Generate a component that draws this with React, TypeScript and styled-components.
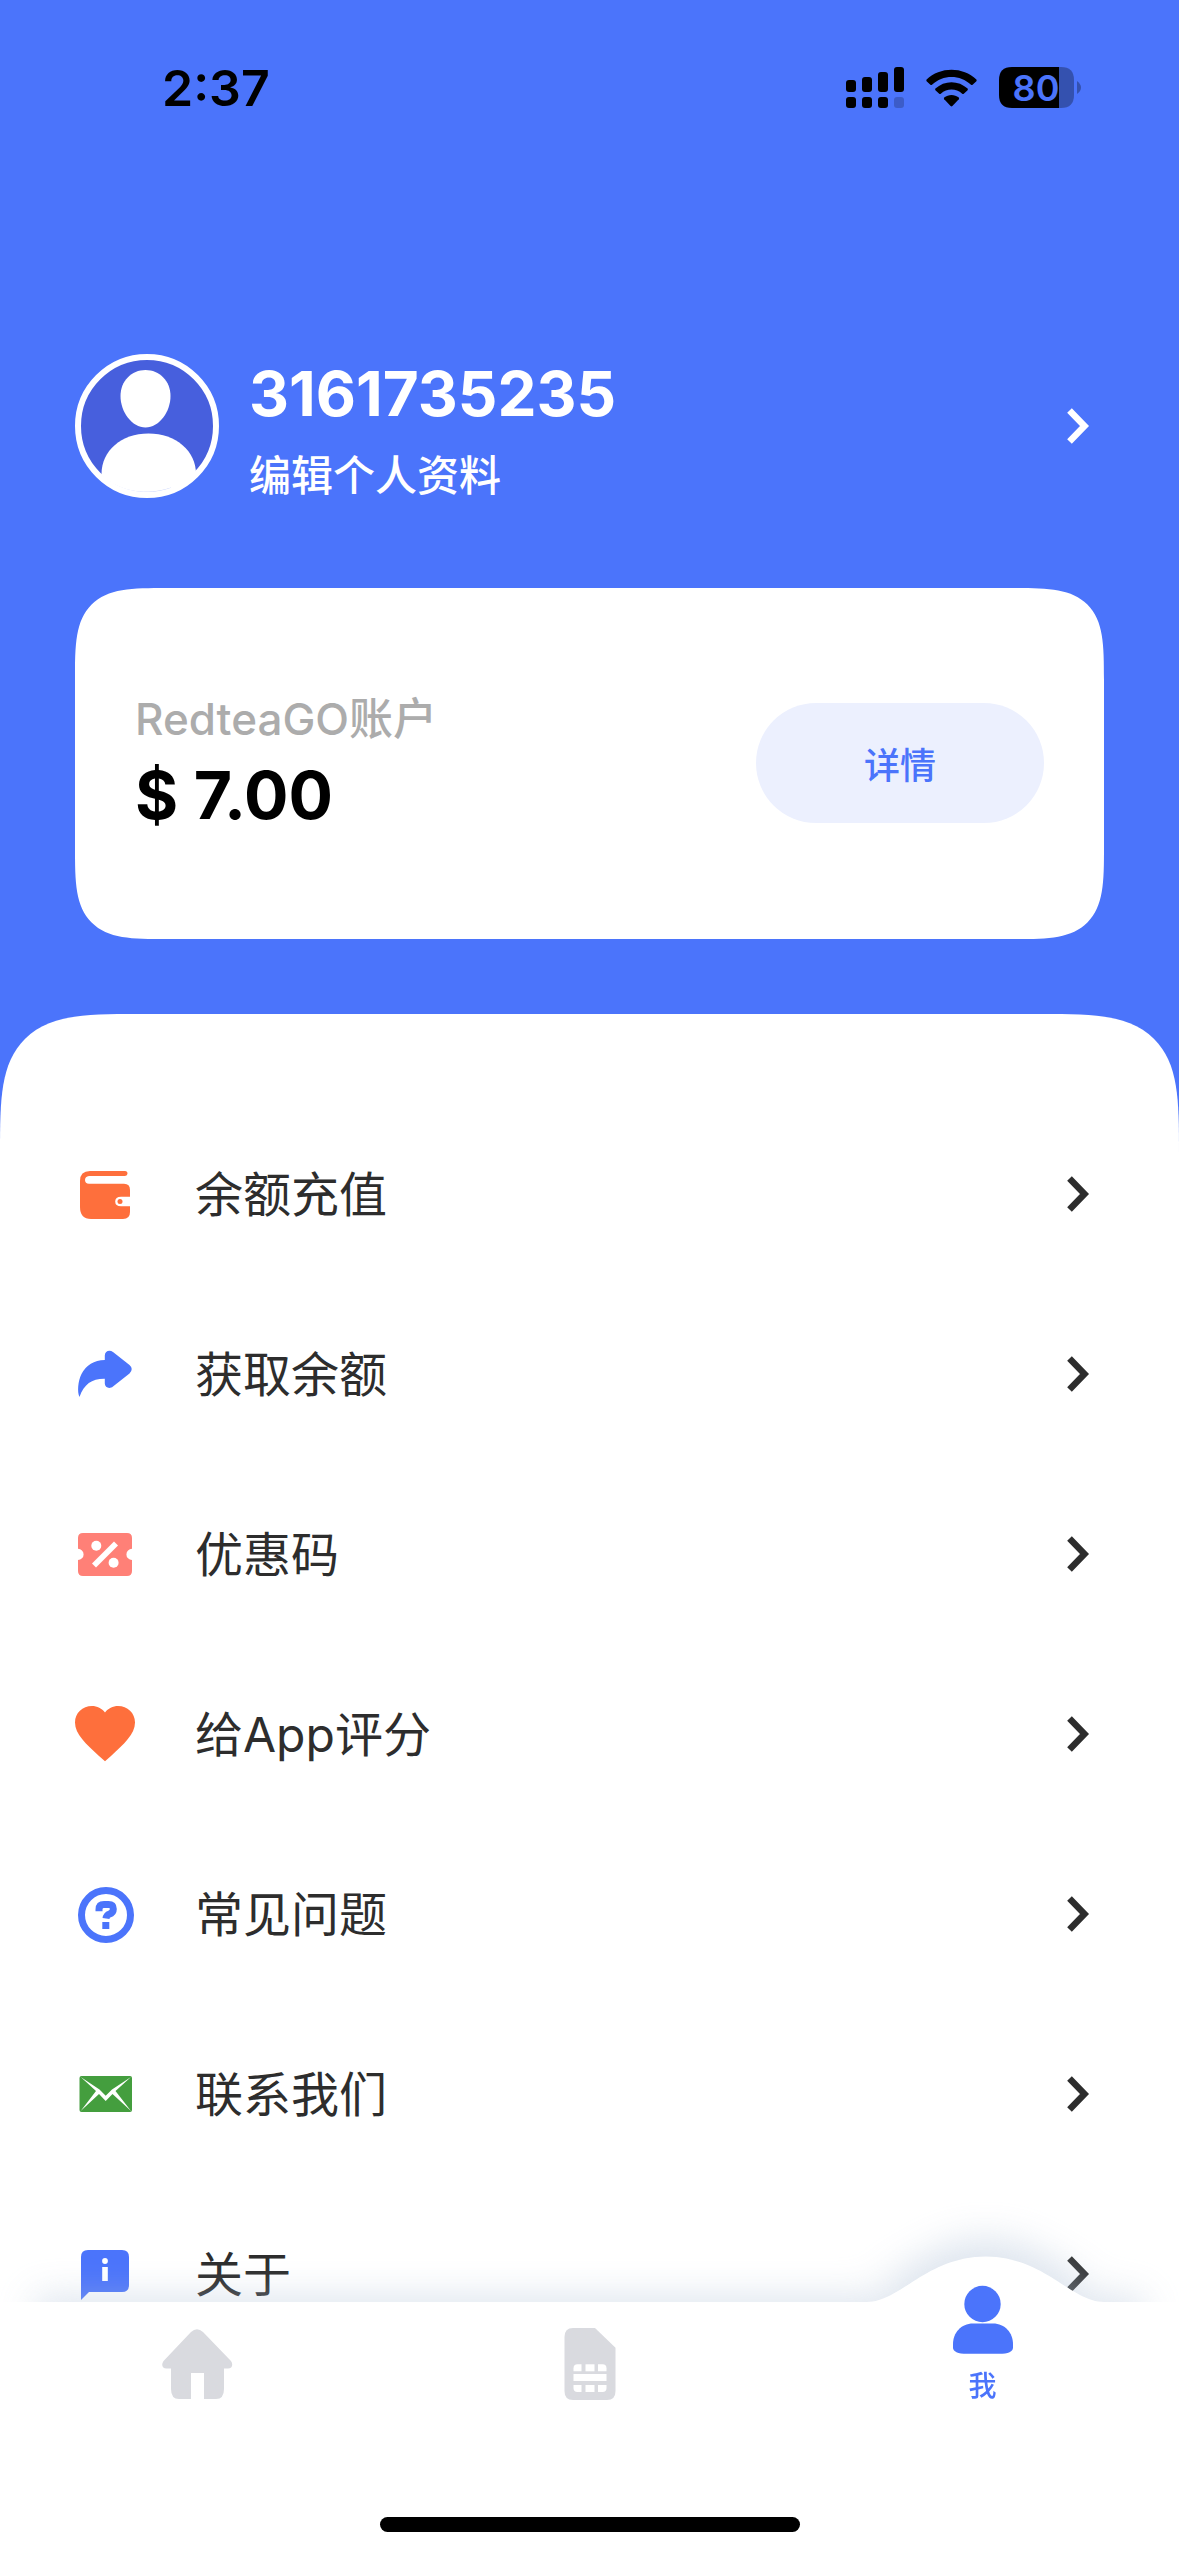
import React from "react";
import styled, { createGlobalStyle, css } from "styled-components";

const color = {
  blue: "#4b74fb",
  ink: "#2d2d2d",
  muted: "#acacac",
  orange: "#fe6f3c",
  coral: "#ff8077",
  green: "#449e3e",
  idle: "#d9dadf",
};

const GlobalStyle = createGlobalStyle`
  * { box-sizing: border-box; }
  body {
    margin: 0;
    background: #fff;
    font-family: Inter, "Noto Sans CJK SC", sans-serif;
    color: ${color.ink};
  }
  button {
    margin: 0;
    padding: 0;
    border: 0;
    background: none;
    font: inherit;
    color: inherit;
    text-align: left;
    cursor: pointer;
  }
`;

const Page = styled.div`
  display: flex;
  flex-direction: column;
  min-height: 100vh;
  background: ${color.blue};
`;

const StatusBar = styled.div`
  display: flex;
  align-items: center;
  justify-content: space-between;
  height: 175px;
  padding: 0 98px 0 162px;
  color: #000;
`;

const Clock = styled.time`
  font-size: 50px;
  line-height: 60px;
  font-weight: 600;
`;

const StatusIcons = styled.div`
  display: flex;
  align-items: center;
  gap: 22px;

  svg {
    display: block;
    overflow: visible;
  }
`;

const Header = styled.header`
  display: flex;
  flex-direction: column;
  gap: 88px;
  padding: 176px 75px 75px;
`;

const Profile = styled.button`
  display: flex;
  align-items: center;
  gap: 30px;
  color: #fff;
`;

const ProfileText = styled.span`
  display: flex;
  flex: 1;
  flex-direction: column;
  gap: 16px;
  padding-top: 1px;
`;

const UserId = styled.span`
  font-size: 62px;
  line-height: 84px;
  font-weight: 700;
`;

const EditHint = styled.span`
  font-size: 42px;
  line-height: 48px;
  font-weight: 500;
`;

const ChevronSlot = styled.span`
  display: flex;
  padding-right: 14px;
`;

const Card = styled.section`
  display: flex;
  align-items: center;
  justify-content: space-between;
  padding: 103px 60px 104px;
  border-radius: 60px;
  background: #fff;

  @supports (corner-shape: superellipse(1.8)) {
    border-radius: 92px;
    corner-shape: superellipse(1.8);
  }
`;

const Account = styled.div`
  display: flex;
  flex-direction: column;
  gap: 8px;
`;

const AccountName = styled.span`
  font-size: 44px;
  line-height: 56px;
  font-weight: 500;
  color: ${color.muted};
`;

const Balance = styled.strong`
  font-size: 66px;
  line-height: 80px;
  font-weight: 700;
  color: #000;
`;

const DetailButton = styled.button`
  width: 288px;
  height: 120px;
  border-radius: 60px;
  background: #ecf0fe;
  font-size: 36px;
  font-weight: 500;
  color: ${color.blue};
  text-align: center;
`;

const Sheet = styled.main`
  flex: 1;
  padding: 90px 75px 192px;
  border-radius: 90px 90px 0 0;
  background: #fff;

  @supports (corner-shape: superellipse(1.8)) {
    border-radius: 138px 138px 0 0;
    corner-shape: superellipse(1.8);
  }
`;

const MenuRow = styled.button`
  display: flex;
  align-items: center;
  gap: 60px;
  width: 100%;
  height: 180px;
  font-size: 48px;
`;

const MenuLabel = styled.span`
  flex: 1;
  padding-bottom: 6px;
`;

const TabBar = styled.nav`
  position: fixed;
  right: 0;
  bottom: 0;
  left: 0;
  padding-bottom: 24px;
`;

const TabBackdrop = styled.svg`
  position: absolute;
  inset: 0;
  width: 100%;
  height: 100%;
  overflow: visible;
  pointer-events: none;
`;

const TabList = styled.div`
  position: relative;
  display: grid;
  grid-template-rows: 104px;
  grid-template-columns: repeat(3, 1fr);
  align-items: end;
`;

const Tab = styled.button<{ $active?: boolean }>`
  display: flex;
  flex-direction: column;
  align-items: center;
  gap: 16px;
  padding-bottom: 6px;
  color: ${color.idle};
  ${(p) =>
    p.$active &&
    css`
      color: ${color.blue};
    `}
`;

const TabLabel = styled.span`
  font-size: 28px;
  line-height: 28px;
  font-weight: 500;
`;

const HomeIndicator = styled.div`
  position: relative;
  width: 420px;
  height: 15px;
  margin: 111px auto 0;
  border-radius: 8px;
  background: #000;
`;

const SignalIcon = () => (
  <svg width="58" height="41" viewBox="0 0 58 41" aria-hidden="true">
    <rect x="0" y="13" width="10" height="12" rx="3" />
    <rect x="16" y="10" width="10" height="15" rx="3" />
    <rect x="32" y="5" width="10" height="20" rx="3" />
    <rect x="48" y="0" width="10" height="25" rx="3" />
    <rect x="0" y="30" width="10" height="11" rx="3" />
    <rect x="16" y="30" width="10" height="11" rx="3" />
    <rect x="32" y="30" width="10" height="11" rx="3" />
    <rect x="48" y="30" width="10" height="11" rx="3" opacity="0.2" />
  </svg>
);

const WifiIcon = () => (
  <svg width="51" height="38" viewBox="0 0 51 38" aria-hidden="true">
    <path d="M0.6 10.6C14 -2.6 37 -2.6 50.4 10.6Q51 11.4 50.4 12.2L46.6 15.8Q45.8 16.4 45 15.8C34.200 5.4 16.800 5.4 6 15.8Q5.200 16.4 4.400 15.8L0.600 12.200Q0 11.400 0.600 10.600Z" />
    <path d="M9.400 19.600C18.400 11 32.600 11 41.600 19.600Q42.200 20.400 41.600 21.200L37.800 24.800Q37 25.400 36.200 24.800C30 19.200 21 19.200 14.800 24.800Q14 25.400 13.200 24.800L9.400 21.200Q8.800 20.400 9.400 19.600Z" />
    <path d="M18.200 28.600C22.400 25 28.600 25 32.800 28.600Q33.500 29.400 32.800 30.200L26.400 37Q25.500 37.800 24.600 37L18.200 30.200Q17.500 29.400 18.200 28.600Z" />
  </svg>
);

const BatteryIcon = () => (
  <svg width="82" height="41" viewBox="0 0 82 41" role="img" aria-label="80%">
    <path d="M60 0H62Q75 0 75 13V28Q75 41 62 41H60Z" opacity="0.3" />
    <path d="M13 0H60V41H13Q0 41 0 28V13Q0 0 13 0Z" />
    <path d="M78 14Q82 17 82 20.500Q82 24 78 27Z" opacity="0.3" />
    <text x="37" y="34" textAnchor="middle" fontSize="36" fontWeight="600" fill={color.blue}>
      80
    </text>
  </svg>
);

const Avatar = () => (
  <svg width="144" height="144" viewBox="0 0 144 144" aria-hidden="true">
    <defs>
      <clipPath id="avatar-disc">
        <circle cx="72" cy="72" r="69" />
      </clipPath>
    </defs>
    <circle cx="72" cy="72" r="69" fill="#475fdd" />
    <g clipPath="url(#avatar-disc)" fill="#fff">
      <path d="M70.500 16C84.500 16 95.500 27 95.500 42C95.500 58 84 73.500 70.500 73.500C57 73.500 45.500 58 45.500 42C45.500 27 56.500 16 70.500 16Z" />
      <path d="M26.500 120C26.500 97 46 79.500 73.500 79.500C101 79.500 121 97 121 120V144H26.500Z" />
    </g>
    <path d="M27 122C46 139 72 142 96 134" fill="none" stroke="#b9c6fb" strokeWidth="0.800" />
    <circle cx="72" cy="72" r="69" fill="none" stroke="#fff" strokeWidth="6" />
  </svg>
);

const Chevron = () => (
  <ChevronSlot>
    <svg width="24" height="38" viewBox="0 0 24 38" aria-hidden="true">
      <path d="M3.500 3.500L18.500 19L3.500 34.500" fill="none" stroke="currentColor" strokeWidth="6.500" />
    </svg>
  </ChevronSlot>
);

const Glyph = ({ size = 60, children }: { size?: number; children: React.ReactNode }) => (
  <svg width={size} height={size} viewBox={`0 0 ${size} ${size}`} aria-hidden="true">
    {children}
  </svg>
);

const WalletIcon = () => (
  <Glyph>
    <g fill={color.orange}>
      <path d="M15 7H50Q52.500 7 52.500 9.600Q52.500 12 50 12H14Q10 12.500 10 16Q10 19.700 14 19.700H49Q55 19.700 55 26V32.700H46Q40.200 32.700 40.200 37.500Q40.200 42.300 46 42.300H55V48Q55 55 48 55H16Q5 55 5 43V17Q5 7 15 7Z" />
      <circle cx="45" cy="37.500" r="2.500" />
    </g>
  </Glyph>
);

const ShareIcon = () => (
  <Glyph>
    <path
      d="M4.500 53C2 48 3 37 6.500 30Q13.500 16.500 29.800 16V11.500C29.800 7 34.500 5.500 38 8L54.500 21Q59 25 54.500 29.500L38 42.500C34.500 45.500 29.800 43.500 29.800 39.500V34.700C17 34.500 9 40 4.500 53Z"
      fill={color.blue}
    />
  </Glyph>
);

const CouponIcon = () => (
  <Glyph>
    <path
      d="M8 9H52Q57 9 57 14V24.800A5.600 5.600 0 0 0 57 36V47Q57 52 52 52H8Q3 52 3 47V36A5.600 5.600 0 0 0 3 24.800V14Q3 9 8 9Z"
      fill={color.coral}
    />
    <circle cx="21.300" cy="21.700" r="5" fill="#fff" />
    <circle cx="38.600" cy="38.800" r="5" fill="#fff" />
    <path d="M41 19.500L19 41.500" stroke="#fff" strokeWidth="5.600" />
  </Glyph>
);

const HeartIcon = () => (
  <Glyph>
    <path
      d="M30 57.300L24 52C11 40 0 30 0 18.500C0 9 7.500 2 17 2C22 2 27 4.500 30 8.500C33 4.500 38 2 43 2C52.500 2 60 9 60 18.500C60 30 49 40 36 52Z"
      fill={color.orange}
    />
  </Glyph>
);

const HelpIcon = () => (
  <Glyph>
    <g fill="none" stroke={color.blue} strokeWidth="7">
      <circle cx="31" cy="31" r="24.500" />
      <path d="M24 27.300V25.500Q24 20.600 29 20.600H33.500Q38.300 20.600 38.300 25Q38.300 29 34.500 30Q31.500 31 31 34.500" />
      <path d="M27.300 41.500H34.300" />
    </g>
  </Glyph>
);

const MailIcon = () => (
  <Glyph>
    <rect x="4.500" y="12" width="52.500" height="36" rx="2" fill={color.green} />
    <path
      d="M5.700 13L24.500 25.500L30.700 31.700L37 25.500L56 13L40.500 27L56 47L37.500 30L30.700 37L24 30L5.700 47L21 27Z"
      fill="#fff"
    />
  </Glyph>
);

const AboutIcon = () => (
  <Glyph>
    <path d="M13 6H47Q54 6 54 13V41Q54 48 47 48H14L6 56V13Q6 6 13 6Z" fill={color.blue} />
    <circle cx="30" cy="17" r="2.900" fill="#fff" />
    <rect x="27.200" y="23" width="5.600" height="14" fill="#fff" />
  </Glyph>
);

const HomeIcon = () => (
  <Glyph size={72}>
    <path
      d="M30 4Q36 -1.500 42 4L69.500 32.500C72.500 36 71.500 40.500 67 40.500H63V61Q63 71 55 71H43V45H30V71H18Q10 71 10 61V40.500H5.500C0.800 40.500 0 36 3 32.500Z"
      fill="currentColor"
    />
  </Glyph>
);

const SimIcon = () => (
  <Glyph size={72}>
    <path
      d="M19 0H41L61.500 19.700V63Q61.500 72 53 72H19Q10.500 72 10.500 63V9Q10.500 0 19 0Z"
      fill="currentColor"
    />
    <g fill="#fff">
      <path d="M23.500 36.300H27.500V43.300H19.500V40.300Q19.500 36.300 23.500 36.300Z" />
      <rect x="31.500" y="36.300" width="9" height="7" />
      <path d="M44 36.300H48.500Q52.500 36.300 52.500 40.300V43.300H44Z" />
      <rect x="19.500" y="46" width="33" height="7" />
      <path d="M19.500 57H27.500V64H23.500Q19.500 64 19.500 60Z" />
      <rect x="31.500" y="57" width="9" height="7" />
      <path d="M44 57H52.500V60Q52.500 64 48.500 64H44Z" />
    </g>
  </Glyph>
);

const PersonIcon = () => (
  <Glyph size={72}>
    <g fill="currentColor">
      <circle cx="35.500" cy="20" r="18.200" />
      <path d="M26 39.500H46C58 39.500 66 49 66 60V63.500Q66 69.800 52 69.800H20Q6 69.800 6 63.500V60C6 49 14 39.500 26 39.500Z" />
    </g>
  </Glyph>
);

const BUMP = "M-119 1H119V0C85 0 60 -45 0 -45.500C-60 -45 -85 0 -119 0Z";

const menu = [
  { label: "余额充值", icon: WalletIcon },
  { label: "获取余额", icon: ShareIcon },
  { label: "优惠码", icon: CouponIcon },
  { label: "给App评分", icon: HeartIcon },
  { label: "常见问题", icon: HelpIcon },
  { label: "联系我们", icon: MailIcon },
  { label: "关于", icon: AboutIcon },
];

export default function App() {
  return (
    <>
      <GlobalStyle />
      <Page>
        <StatusBar>
          <Clock>2:37</Clock>
          <StatusIcons>
            <SignalIcon />
            <WifiIcon />
            <BatteryIcon />
          </StatusIcons>
        </StatusBar>

        <Header>
          <Profile type="button">
            <Avatar />
            <ProfileText>
              <UserId>3161735235</UserId>
              <EditHint>编辑个人资料</EditHint>
            </ProfileText>
            <Chevron />
          </Profile>

          <Card>
            <Account>
              <AccountName>RedteaGO账户</AccountName>
              <Balance>$ 7.00</Balance>
            </Account>
            <DetailButton type="button">详情</DetailButton>
          </Card>
        </Header>

        <Sheet>
          {menu.map(({ label, icon: Icon }) => (
            <MenuRow key={label} type="button">
              <Icon />
              <MenuLabel>{label}</MenuLabel>
              <Chevron />
            </MenuRow>
          ))}
        </Sheet>

        <TabBar>
          <TabBackdrop aria-hidden="true">
            <defs>
              <filter id="bar-shadow" x="-10%" y="-60%" width="120%" height="220%">
                <feGaussianBlur stdDeviation="18" />
              </filter>
            </defs>
            <g filter="url(#bar-shadow)" fill="#b6c6da" opacity="0.45">
              <rect x="3%" y="-6" width="94%" height="160" />
              <svg x="83.600%" y="-18" overflow="visible">
                <path d={BUMP} />
                <rect x="-90" width="180" height="40" />
              </svg>
            </g>
            <rect width="100%" height="100%" fill="#fff" />
            <svg x="83.600%" y="0" overflow="visible">
              <path d={BUMP} fill="#fff" />
            </svg>
          </TabBackdrop>
          <TabList>
            <Tab type="button" aria-label="首页">
              <HomeIcon />
            </Tab>
            <Tab type="button" aria-label="SIM">
              <SimIcon />
            </Tab>
            <Tab type="button" $active>
              <PersonIcon />
              <TabLabel>我</TabLabel>
            </Tab>
          </TabList>
          <HomeIndicator />
        </TabBar>
      </Page>
    </>
  );
}
